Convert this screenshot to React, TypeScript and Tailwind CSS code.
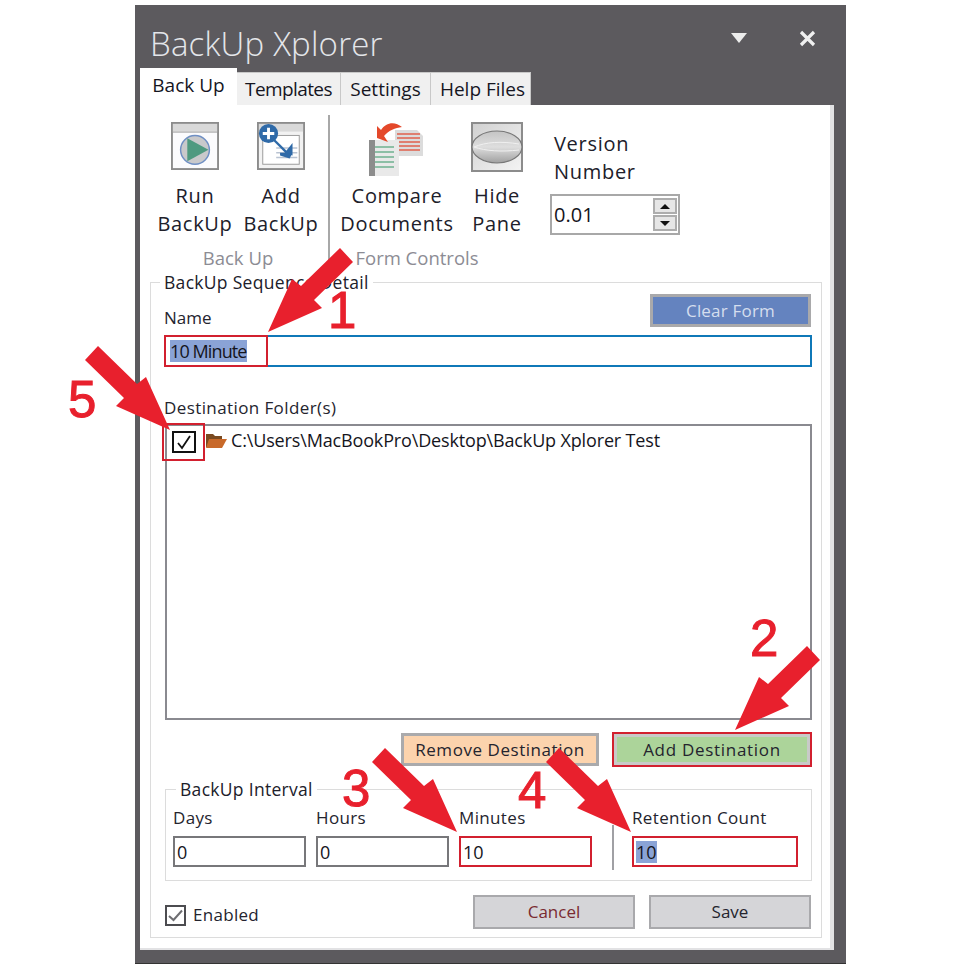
const font = "font-['Open_Sans','Noto_Sans',sans-serif]";

function RunIcon() {
  return (
    <svg width="48" height="48" viewBox="0 0 50 50">
      <rect x="1" y="1" width="48" height="48" fill="#fbfbfd" stroke="#8c8c8c" strokeWidth="2" />
      <rect x="2" y="2" width="46" height="8" fill="#d9d9d9" />
      <line x1="2" y1="10.5" x2="48" y2="10.5" stroke="#9a9a9a" />
      <circle cx="25" cy="29" r="15" fill="#c9c9cb" stroke="#6f8fc4" strokeWidth="1.5" />
      <path d="M17 17 L39 29 L17 41 Z" fill="#4f9a80" />
    </svg>
  );
}

function AddIcon() {
  return (
    <svg width="48" height="48" viewBox="0 0 50 50">
      <rect x="1" y="1" width="48" height="48" fill="#f2f2f2" stroke="#8c8c8c" strokeWidth="2" />
      <rect x="2" y="2" width="46" height="8" fill="#d9d9d9" />
      <rect x="6" y="14" width="38" height="30" fill="#ffffff" stroke="#9a9a9a" />
      <path d="M20 32 H42 M20 37 H42 M20 27 H42" stroke="#b9c3d2" strokeWidth="1.5" />
      <path d="M18 19 L31 32" stroke="#2f6aa8" strokeWidth="2.5" />
      <path d="M24 32 L37 32 L34 38 L24 35 Z M37 22 L37 35 L28 33 Z" fill="#2f6aa8" />
      <circle cx="12" cy="12" r="10" fill="#2f6aa8" />
      <path d="M6 12 H18 M12 6 V18" stroke="#ffffff" strokeWidth="3" />
    </svg>
  );
}

function CompareIcon() {
  return (
    <svg width="56" height="54" viewBox="0 0 56 54">
      <path d="M26 8 H48 L54 14 V34 H26 Z" fill="#dcdcdc" />
      <path d="M28 12 H51 M28 16 H51 M28 20 H51 M28 24 H51 M28 28 H51" stroke="#e0604c" strokeWidth="1.6" />
      <path d="M0 18 H30 V54 H0 Z" fill="#e9e9e9" />
      <path d="M0 18 H6 V54 H0 Z" fill="#8c8c8c" />
      <path d="M6 25 H25 M6 30 H25 M6 35 H25 M6 40 H25 M6 45 H25" stroke="#8dbfa6" strokeWidth="1.8" />
      <path d="M8 4 L8 16 L19 20 L15 14 C20 8 26 6 33 5 C26 -1 17 0 12 8 Z" fill="#e4482a" />
    </svg>
  );
}

function HideIcon() {
  return (
    <svg width="52" height="50" viewBox="0 0 52 50">
      <defs>
        <linearGradient id="hideBg" x1="0" y1="0" x2="1" y2="1">
          <stop offset="0" stopColor="#d0d0d0" />
          <stop offset="1" stopColor="#f4f4f4" />
        </linearGradient>
        <linearGradient id="hideEllipse" x1="0" y1="0" x2="0" y2="1">
          <stop offset="0" stopColor="#c4c4c4" />
          <stop offset="0.5" stopColor="#dedede" />
          <stop offset="1" stopColor="#a0a0a0" />
        </linearGradient>
      </defs>
      <rect x="1" y="1" width="50" height="48" fill="url(#hideBg)" stroke="#8c8c8c" strokeWidth="2" />
      <ellipse cx="26" cy="25" rx="25" ry="16" fill="url(#hideEllipse)" stroke="#777777" strokeWidth="1.2" />
      <path d="M3 25 C15 20 30 19 48 22 M3 25 C15 29 30 30 48 28" stroke="#f0f0f0" fill="none" />
    </svg>
  );
}

function FolderIcon() {
  return (
    <svg width="22" height="18" viewBox="0 0 22 18">
      <path d="M1 2 H8 L10 4 H17 V15 H1 Z" fill="#7a4a20" />
      <path d="M4 7 H22 L17 16 H1 Z" fill="#c8692a" />
    </svg>
  );
}

function RibbonButton({ icon, lines, width }: { icon: React.ReactNode; lines: string[]; width: string }) {
  return (
    <div className={`${width} flex flex-col items-center pt-[7px]`}>
      <div className="h-[60px] flex items-start justify-center">{icon}</div>
      {lines.map((l) => (
        <div key={l} className="text-[20px] leading-[28px] tracking-[0.7px] text-[#20202a]">{l}</div>
      ))}
    </div>
  );
}

function Field({ label, value, width, red, selected }: { label: string; value: string; width: string; red?: boolean; selected?: boolean }) {
  return (
    <div className={width}>
      <div className="text-[17px] leading-[20px] tracking-[0.35px] text-[#24242e] whitespace-nowrap">{label}</div>
      <div className={`mt-[8px] h-[31px] px-[2px] flex items-center border-2 text-[18px] text-[#15151c] ${red ? "border-[#d2202f]" : "border-[#77777a]"}`}>
        <span className={selected ? "bg-[#8aa3d6] leading-[22px]" : "leading-[22px]"}>{value}</span>
      </div>
    </div>
  );
}

const arrows = [
  { tip: [268, 332], flip: true },
  { tip: [735, 730], flip: true },
  { tip: [457, 832], flip: false },
  { tip: [631, 832], flip: false },
  { tip: [170, 430], flip: false },
];

// annotations drawn on top of the screenshot
function Arrows() {
  return (
    <svg className="absolute inset-0 pointer-events-none" width="980" height="980">
      {arrows.map((a) => (
        <polygon
          key={a.tip.join()}
          points="-72,-84 -33,-46 -24,-53 0,0 -54,-24 -46,-32 -85,-70"
          fill="#e8202d"
          transform={`translate(${a.tip[0]} ${a.tip[1]}) scale(${a.flip ? -1 : 1} 1)`}
        />
      ))}
    </svg>
  );
}

export default function App() {
  return (
    <div className={`relative w-[980px] h-[980px] bg-white overflow-hidden ${font}`}>
      {/* Window */}
      <div className="ml-[135px] mt-[5px] w-[711px] h-[959px] bg-[#5c5a5e] border-b border-[#333333] flex flex-col">
        <div className="h-[63px] shrink-0 flex pl-[15px]">
          <div className="mt-[16px] text-[33px] leading-[46px] font-light text-[#e4e6ea] tracking-[0.2px]">BackUp Xplorer</div>
          <div className="ml-auto mt-[28px] mr-[52px] w-0 h-0 border-l-[8px] border-r-[8px] border-t-[10px] border-l-transparent border-r-transparent border-t-[#ececec]" />
          <svg className="mt-[25px] mr-[30px]" width="17" height="17" viewBox="0 0 17 17">
            <path d="M2 2 L15 15 M15 2 L2 15" stroke="#f0f0f0" strokeWidth="3.2" />
          </svg>
        </div>

        {/* Tabs */}
        <div className="h-[37px] shrink-0 ml-[5px] flex items-end text-[19px] text-[#15151f]">
          <div className="w-[97px] h-[37px] bg-white flex items-center justify-center pb-[2px]">Back Up</div>
          <div className="w-[104px] h-[33px] bg-[#f0f0f0] border-t border-r border-[#c8c8c8] flex items-center justify-center tracking-[-0.6px]">Templates</div>
          <div className="w-[90px] h-[33px] bg-[#f0f0f0] border-t border-r border-[#c8c8c8] flex items-center justify-center">Settings</div>
          <div className="w-[100px] h-[33px] bg-[#f0f0f0] border-t border-r border-[#c8c8c8] flex items-center justify-center pl-[4px]">Help Files</div>
        </div>

        {/* Panel */}
        <div className="ml-[5px] w-[694px] h-[845px] bg-white border-r-4 border-b-2 border-[#e2e2e4] pl-[10px]">
          {/* Ribbon */}
          <div className="h-[167px] flex pt-[10px] pl-[2px]">
            <div className="w-[172px] flex flex-col">
              <div className="flex">
                <RibbonButton icon={<RunIcon />} width="w-[86px]" lines={["Run", "BackUp"]} />
                <RibbonButton icon={<AddIcon />} width="w-[86px]" lines={["Add", "BackUp"]} />
              </div>
              <div className="mt-[8px] text-center text-[18.5px] leading-[24px] text-[#8c8c94]">Back Up</div>
            </div>
            <div className="ml-[4px] w-[2px] h-[155px] bg-[#a8a8a8]" />
            <div className="ml-[10px] w-[200px] flex flex-col">
              <div className="flex">
                <RibbonButton icon={<CompareIcon />} width="w-[114px]" lines={["Compare", "Documents"]} />
                <RibbonButton icon={<HideIcon />} width="w-[86px]" lines={["Hide", "Pane"]} />
              </div>
              <div className="mt-[8px] pr-[46px] text-center text-[18.5px] leading-[24px] text-[#8c8c94]">Form Controls</div>
            </div>
            <div className="ml-[10px] pt-[15px]">
              <div className="pl-[4px] text-[20px] leading-[28px] tracking-[0.7px] text-[#20202a]">Version</div>
              <div className="pl-[4px] text-[20px] leading-[28px] tracking-[0.7px] text-[#20202a]">Number</div>
              <div className="mt-[8px] w-[130px] h-[41px] border-2 border-[#a8a8a8] flex items-center pl-[2px] pr-[1px] text-[20px] text-[#15151c]">
                <span>0.01</span>
                <div className="ml-auto flex flex-col gap-[1px]">
                  <div className="w-[24px] h-[16px] bg-[#e6e6e6] border-2 border-[#adadad] flex items-center justify-center">
                    <div className="w-0 h-0 border-l-[5px] border-r-[5px] border-b-[5px] border-l-transparent border-r-transparent border-b-[#111111]" />
                  </div>
                  <div className="w-[24px] h-[16px] bg-[#e6e6e6] border-2 border-[#adadad] flex items-center justify-center">
                    <div className="w-0 h-0 border-l-[5px] border-r-[5px] border-t-[5px] border-l-transparent border-r-transparent border-t-[#111111]" />
                  </div>
                </div>
              </div>
            </div>
          </div>

          {/* BackUp Sequence Detail */}
          <fieldset className="w-[672px] h-[666px] border border-[#dcdcdc] pl-[13px] pr-[9px]">
            <legend className="ml-[-4px] px-[4px] text-[17.5px] leading-[20px] font-medium tracking-[0.3px] text-[#20202a]">BackUp Sequence Detail</legend>
            <div className="mt-[2px] h-[33px] pr-[1px] flex items-end justify-between">
              <div className="text-[17px] leading-[20px] text-[#24242e] mb-[-1px]">Name</div>
              <div className="w-[161px] h-[33px] bg-[#6483bf] border-[3px] border-[#a9a9ab] flex items-center justify-center text-[17px] tracking-[0.2px] text-[#d5deee]">Clear Form</div>
            </div>
            <div className="relative mt-[8px] h-[32px] border-2 border-[#0f78b8] pl-[4px] flex items-center text-[18px] tracking-[-0.9px] text-[#15151c]">
              <span className="bg-[#8aa3d6] leading-[22px]">10 Minute</span>
              <div className="absolute left-[-2px] top-[-2px] w-[104px] h-[32px] border-2 border-[#d2202f]" />
            </div>
            <div className="mt-[31px] text-[17px] leading-[20px] tracking-[0.4px] text-[#24242e]">Destination Folder(s)</div>
            <div className="relative mt-[6px] ml-[1px] h-[296px] border-2 border-[#8a8a90] flex items-start pl-[5px] pt-[4px]">
              <div className="w-[24px] h-[22px] mt-[1px] border-2 border-[#111111] flex items-center justify-center">
                <svg width="16" height="15" viewBox="0 0 16 15"><path d="M2 8 L6 13 L14 1" fill="none" stroke="#111111" strokeWidth="1.8" /></svg>
              </div>
              <div className="ml-[9px] mt-[2px]"><FolderIcon /></div>
              <div className="ml-[4px] mt-[1px] text-[18px] leading-[18px] tracking-[-0.15px] text-[#15151c] whitespace-nowrap">C:\Users\MacBookPro\Desktop\BackUp Xplorer Test</div>
              <div className="absolute left-[-5px] top-[-3px] w-[43px] h-[38px] border-2 border-[#d2202f]" />
            </div>
            <div className="mt-[12px] h-[35px] flex items-center justify-end gap-[13px] text-[17px] text-[#24242e]">
              <div className="w-[198px] h-[33px] bg-[#fcd3ad] border-[3px] border-[#aaaaac] flex items-center justify-center tracking-[0.55px]">Remove Destination</div>
              <div className="w-[200px] h-[35px] bg-[#acd49a] border-2 border-[#d2202f] outline-[3px] outline-[#c8cac8] outline-offset-[-5px] flex items-center justify-center tracking-[0.7px]">Add Destination</div>
            </div>

            {/* BackUp Interval */}
            <fieldset className="mt-[12px] ml-[1px] w-[647px] border border-[#dcdcdc] pl-[7px] pb-[13px]">
              <legend className="ml-[3px] px-[4px] text-[17.5px] leading-[20px] font-medium tracking-[0.3px] text-[#20202a]">BackUp Interval</legend>
              <div className="mt-[9px] flex items-end">
                <Field label="Days" value="0" width="w-[133px]" />
                <Field label="Hours" value="0" width="w-[133px] ml-[10px]" />
                <Field label="Minutes" value="10" width="w-[133px] ml-[10px]" red />
                <div className="ml-[20px] w-[2px] h-[45px] mb-[-3px] bg-[#a0a0a4]" />
                <Field label="Retention Count" value="10" width="w-[166px] ml-[18px]" red selected />
              </div>
            </fieldset>

            <div className="mt-[14px] h-[34px] pr-[1px] flex items-center gap-[14px]">
              <div className="mr-auto flex items-center gap-[7px] ml-[1px] mt-[6px]">
                <div className="w-[21px] h-[21px] border-2 border-[#4c4c50] flex items-center justify-center">
                  <svg width="15" height="13" viewBox="0 0 15 13"><path d="M1 7 L5.5 11 L14 1.5" fill="none" stroke="#6e6e72" strokeWidth="2" /></svg>
                </div>
                <span className="text-[17px] tracking-[0.3px] text-[#24242e]">Enabled</span>
              </div>
              <div className="w-[162px] h-[34px] bg-[#d5d5d8] border-2 border-[#a9a9ac] flex items-center justify-center text-[17px] text-[#7a2a30]">Cancel</div>
              <div className="w-[162px] h-[34px] bg-[#d5d5d8] border-2 border-[#a9a9ac] flex items-center justify-center text-[17px] text-[#24242e]">Save</div>
            </div>
          </fieldset>
        </div>
      </div>

      {/* Annotations */}
      <Arrows />
      <span className="absolute left-[328px] top-[282px] text-[51px] leading-[58px] text-[#e8202d] font-['Liberation_Sans',sans-serif] [-webkit-text-stroke:1px_#e8202d]">1</span>
      <span className="absolute left-[750px] top-[610px] text-[51px] leading-[58px] text-[#e8202d] font-['Liberation_Sans',sans-serif] [-webkit-text-stroke:1px_#e8202d]">2</span>
      <span className="absolute left-[342px] top-[760px] text-[51px] leading-[58px] text-[#e8202d] font-['Liberation_Sans',sans-serif] [-webkit-text-stroke:1px_#e8202d]">3</span>
      <span className="absolute left-[518px] top-[762px] text-[51px] leading-[58px] text-[#e8202d] font-['Liberation_Sans',sans-serif] [-webkit-text-stroke:1px_#e8202d]">4</span>
      <span className="absolute left-[68px] top-[371px] text-[51px] leading-[58px] text-[#e8202d] font-['Liberation_Sans',sans-serif] [-webkit-text-stroke:1px_#e8202d]">5</span>
    </div>
  );
}
